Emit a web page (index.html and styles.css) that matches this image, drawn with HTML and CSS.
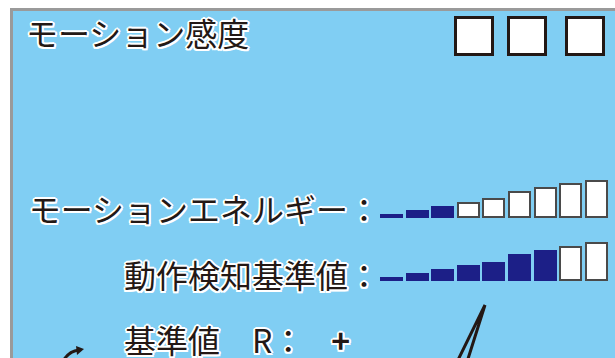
FILE: index.html
```html
<!DOCTYPE html>
<html lang="ja">
<head>
  <meta charset="UTF-8" />
  <meta name="viewport" content="width=device-width, initial-scale=1.0"/>
  <title>モーション感度</title>
  <link rel="stylesheet" href="styles.css">
</head>
<body>
  <div class="panel">
    <div class="top-row">
      <h2 class="title">モーション感度</h2>
      <div class="checks">
        <span class="check"></span>
        <span class="check"></span>
        <span class="check wide"></span>
      </div>
    </div>

    <div class="meter-row first">
      <span class="label">モーションエネルギー：</span>
      <div class="bars">
        <span class="bar on" style="height:4px"></span>
        <span class="bar on" style="height:8px"></span>
        <span class="bar on" style="height:12px"></span>
        <span class="bar" style="height:16px"></span>
        <span class="bar" style="height:20px"></span>
        <span class="bar" style="height:27px"></span>
        <span class="bar" style="height:31px"></span>
        <span class="bar" style="height:35px"></span>
        <span class="bar" style="height:38px"></span>
      </div>
    </div>

    <div class="meter-row second">
      <span class="label">動作検知基準値：</span>
      <div class="bars">
        <span class="bar on" style="height:4px"></span>
        <span class="bar on" style="height:8px"></span>
        <span class="bar on" style="height:12px"></span>
        <span class="bar on" style="height:16px"></span>
        <span class="bar on" style="height:19px"></span>
        <span class="bar on" style="height:27px"></span>
        <span class="bar on" style="height:31px"></span>
        <span class="bar" style="height:35px"></span>
        <span class="bar" style="height:39px"></span>
      </div>
    </div>

    <div class="base-row">基準値　R：<span class="sign">+</span></div>
  </div>

  <svg class="overlay" width="615" height="358" viewBox="0 0 615 358">
    <!-- needle -->
    <polyline points="457,362 485,305 467,362" fill="none" stroke="#231815" stroke-width="3" stroke-linejoin="miter"/>
    <!-- curved arrow -->
    <path d="M63 361 Q69 351 79 350" fill="none" stroke="#231815" stroke-width="3"/>
    <polygon points="76,346 84,349 77,355" fill="#231815"/>
  </svg>
</body>
</html>
```

FILE: styles.css
```css
body {
  margin: 0;
  background: #fff;
  font-family: "Noto Sans CJK JP", "Noto Sans", sans-serif;
  color: #231815;
  overflow: hidden;
}
.panel {
  margin: 8px 0 0 10px;
  height: 350px;
  overflow: hidden;
  border-top: 3px solid #9a9a9a;
  border-left: 3px solid #9a9a9a;
  background: #80cef3;
  padding: 5px 0 0 0;
  box-sizing: border-box;
}
.top-row {
  display: flex;
  justify-content: space-between;
  align-items: flex-start;
}
.title, .label, .base-row {
  font-size: 32px;
  font-weight: normal;
  line-height: 32px;
  text-shadow:
    2px 0 0 #fff, -2px 0 0 #fff, 0 2px 0 #fff, 0 -2px 0 #fff,
    1.5px 1.5px 0 #fff, -1.5px 1.5px 0 #fff, 1.5px -1.5px 0 #fff, -1.5px -1.5px 0 #fff;
}
.title {
  margin: 0 0 0 13px;
}
.checks {
  display: flex;
  gap: 13px;
  margin-right: 10px;
}
.check {
  width: 40px;
  height: 40px;
  box-sizing: border-box;
  border: 3px solid #231815;
  background: #fff;
}
.check.wide {
  margin-left: 5px;
}
.meter-row {
  display: flex;
  align-items: flex-end;
}
.meter-row .label {
  width: 367px;
  text-align: right;
}
.meter-row.first {
  margin-top: 124px;
}
.meter-row.second {
  margin-top: 18px;
}
.meter-row.first .bars {
  margin-bottom: 6px;
}
.meter-row.second .bars {
  margin-bottom: 9px;
}
.bars {
  display: flex;
  align-items: flex-end;
  gap: 2.6px;
}
.bar {
  width: 23px;
  box-sizing: border-box;
  background: #fff;
  border: 2px solid #4a4a4a;
}
.bar.on {
  background: #1c1f87;
  border: none;
}
.base-row {
  margin: 33px 0 0 111px;
}
.sign {
  margin-left: 27px;
  font-weight: bold;
}
.overlay {
  position: absolute;
  top: 0;
  left: 0;
  pointer-events: none;
}
```
